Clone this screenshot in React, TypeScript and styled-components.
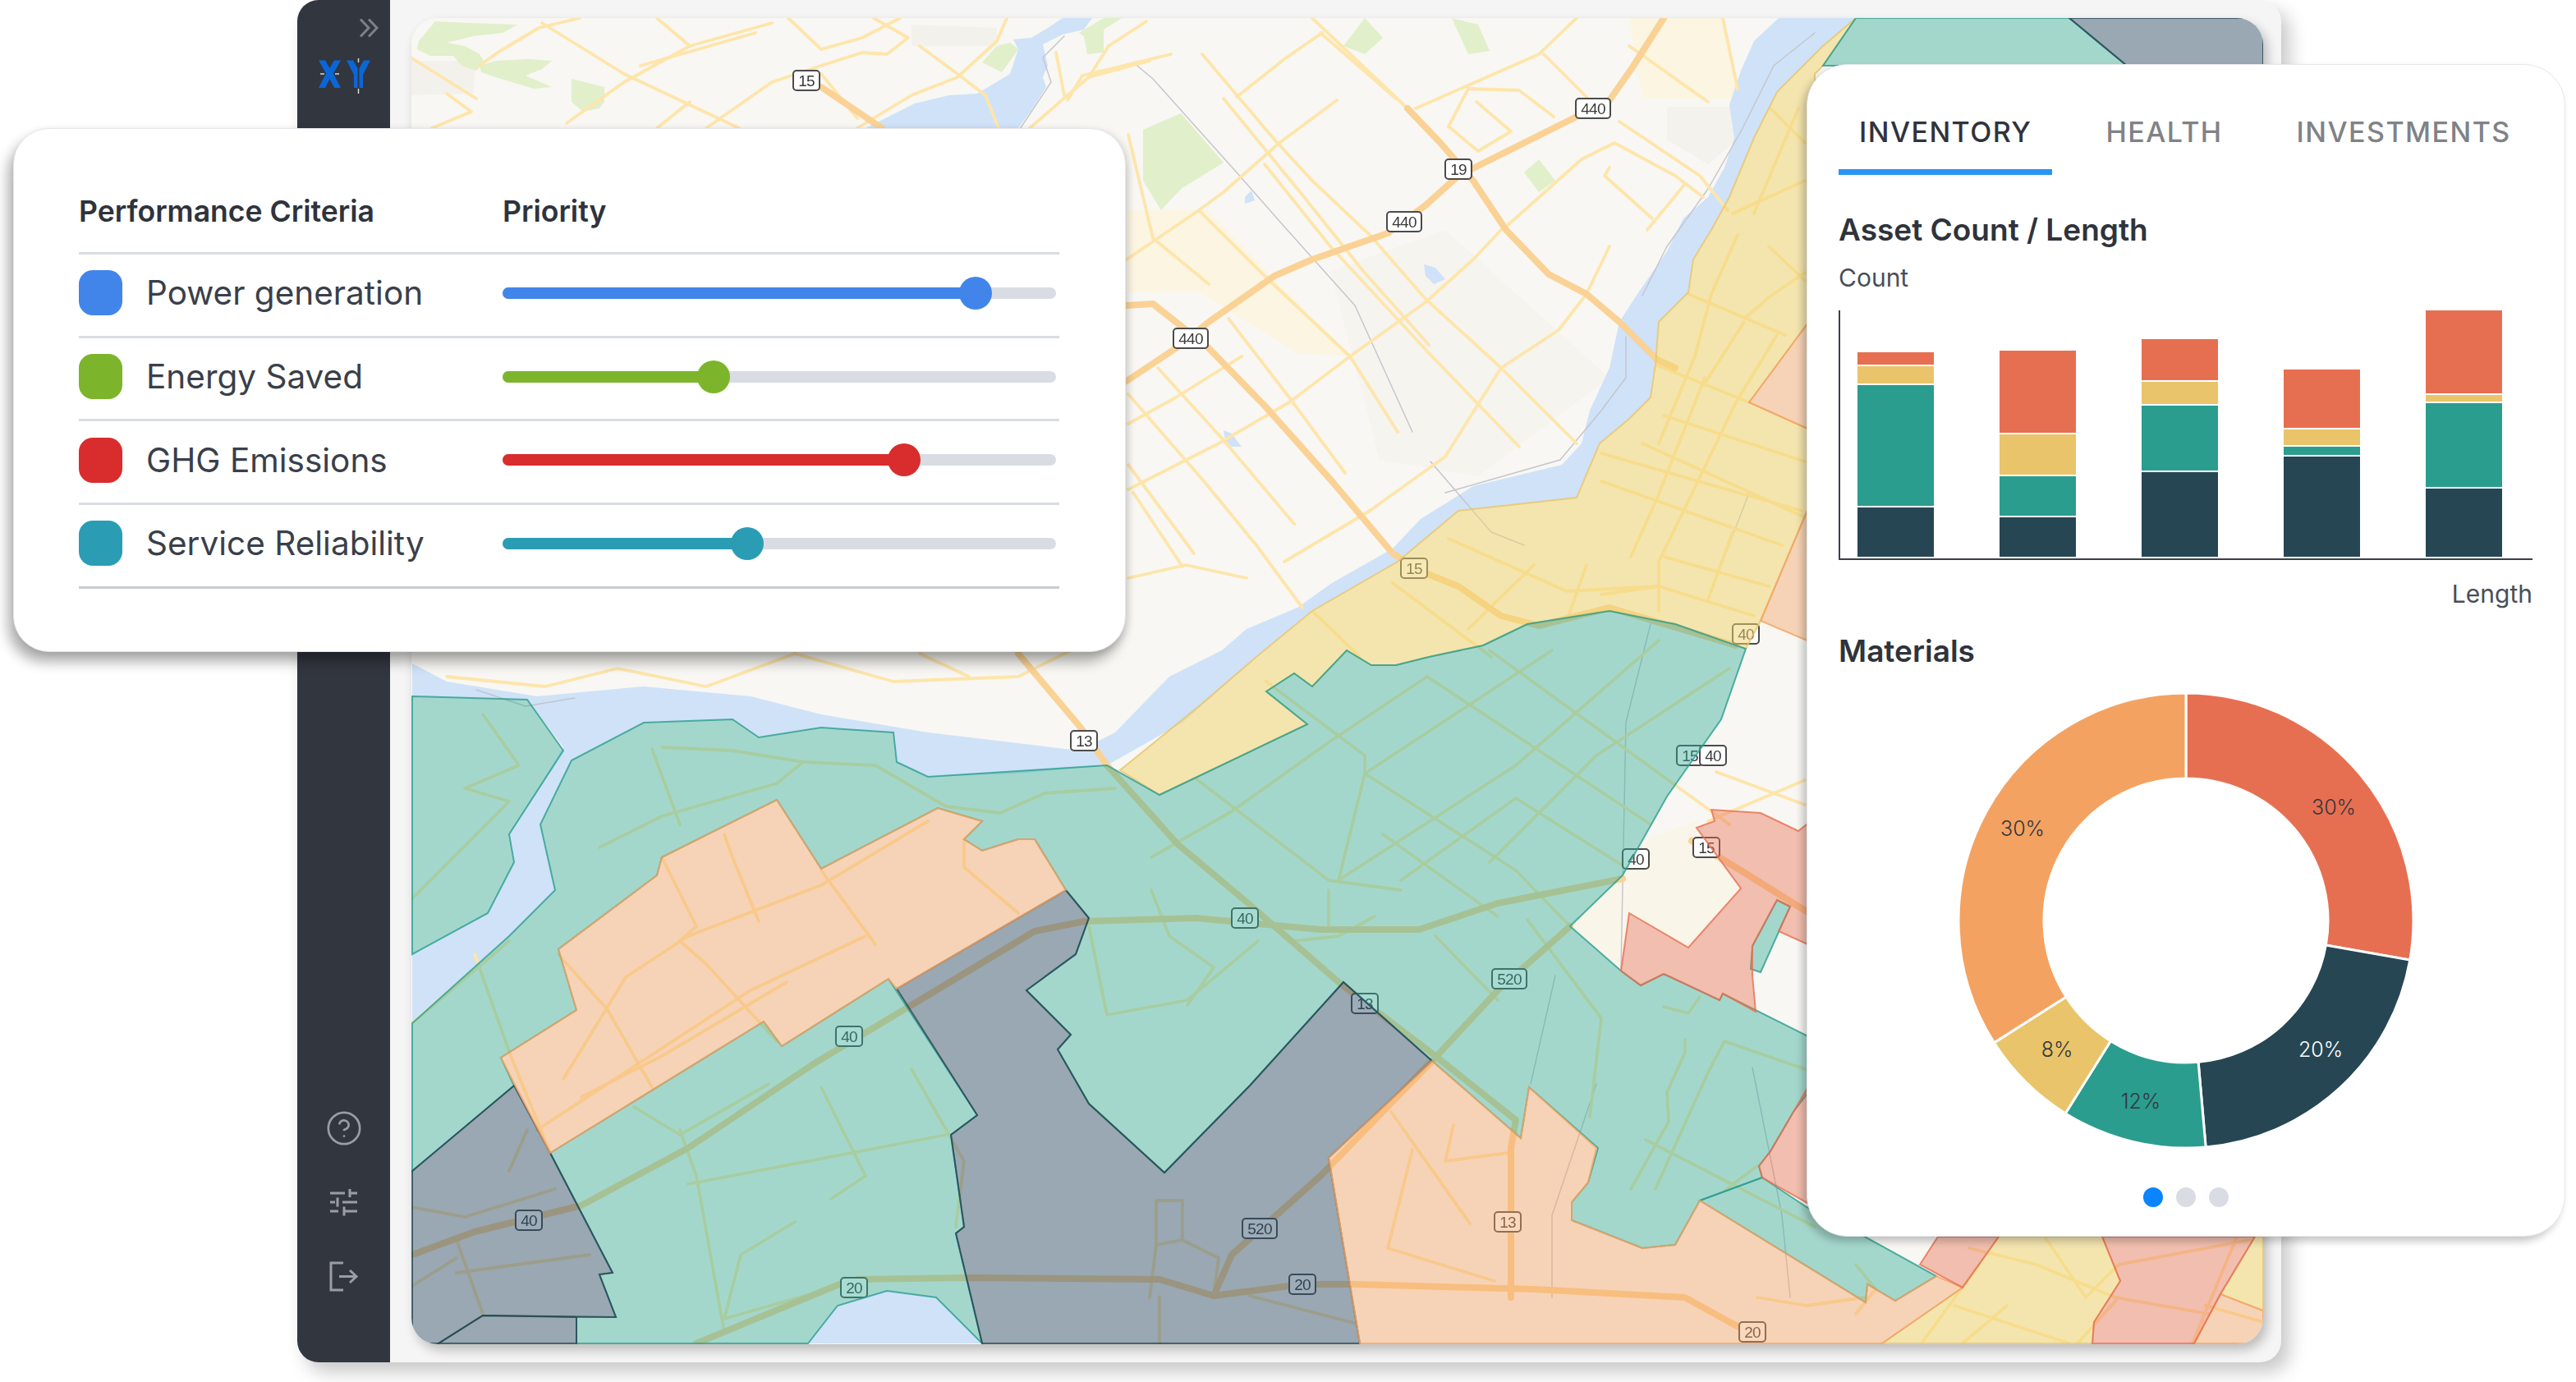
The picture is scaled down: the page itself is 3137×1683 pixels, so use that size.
import { CircleHelp } from 'lucide-react';
import styled, { createGlobalStyle } from 'styled-components';

const GlobalStyle = createGlobalStyle`
  html, body {
    margin: 0;
    background: #ffffff;
    overflow: hidden;
  }
  * {
    box-sizing: border-box;
  }
`;

const Page = styled.div`
  position: relative;
  width: 3137px;
  height: 1683px;
  padding-left: 362px;
  font-family: Inter, "Liberation Sans", sans-serif;
  color: #2f333c;
`;

const Frame = styled.div`
  display: flex;
  width: 2416px;
  height: 1659px;
  background: #f5f5f5;
  border-radius: 26px;
  box-shadow: 10px 12px 22px rgba(0, 0, 0, 0.22);
`;

const Sidebar = styled.nav`
  display: flex;
  flex-direction: column;
  width: 113px;
  flex-shrink: 0;
  padding: 22px 12px 85px 26px;
  background: #32363f;
  border-radius: 26px 0 0 26px;
`;

const Collapse = styled.svg`
  display: block;
  align-self: flex-end;
  width: 26px;
  height: 24px;
`;

const Logo = styled.svg`
  display: block;
  width: 66px;
  height: 44px;
  margin-top: 25px;
`;

const SideIcons = styled.div`
  display: flex;
  flex-direction: column;
  align-items: center;
  gap: 50px;
  width: 62px;
  margin-top: auto;
  color: #9b9da3;

  & > .help {
    margin: -3px;
  }
`;

const SideIcon = styled.svg`
  display: block;
  width: 40px;
  height: 40px;
`;

const MapArea = styled.main`
  flex: 1;
  padding: 22px 22px 22px 26px;
`;

const MapBox = styled.div`
  height: 100%;
  border-radius: 32px;
  overflow: hidden;
  box-shadow: 5px 7px 14px rgba(0, 0, 0, 0.24);
`;

const MapSvg = styled.svg`
  display: block;
  width: 100%;
  height: 100%;
  background: #f8f7f3;
  filter: blur(0.7px);
`;

const Road = styled.polyline<{ $w?: number; $c?: string }>`
  fill: none;
  stroke: ${(p) => p.$c || '#fee5aa'};
  stroke-width: ${(p) => p.$w || 1.9};
  stroke-linejoin: round;
  stroke-linecap: round;
`;

const Area = styled.polygon<{ $c: string }>`
  fill: ${(p) => p.$c};
`;

const Zone = styled.polygon<{ $c: string; $s: string; $o?: number }>`
  fill: ${(p) => p.$c};
  fill-opacity: ${(p) => p.$o || 0.42};
  stroke: ${(p) => p.$s};
  stroke-opacity: 0.8;
  stroke-width: 1;
`;

const ShieldBox = styled.rect`
  fill: #ffffff;
  stroke: #4b4b4b;
  stroke-width: 1;
`;

const ShieldText = styled.text`
  font-family: "Liberation Sans", Arial, sans-serif;
  font-size: 9.5px;
  letter-spacing: -0.4px;
  fill: #3a3a3a;
  text-anchor: middle;
`;

const CriteriaCard = styled.section`
  position: absolute;
  left: 16px;
  top: 156px;
  width: 1355px;
  height: 638px;
  padding: 62px 80px 0 79px;
  background: #ffffff;
  border: 1px solid #e4e7eb;
  border-radius: 44px;
  box-shadow: -6px 12px 16px rgba(0, 0, 0, 0.32), 4px 2px 8px rgba(0, 0, 0, 0.1);
`;

const CriteriaHead = styled.div`
  display: grid;
  grid-template-columns: 516px 1fr;
  align-items: center;
  height: 91px;
  padding-bottom: 12px;
  border-bottom: 3px solid #d9dde3;
  font-size: 35.6px;
  font-weight: 600;
`;

const CriteriaRow = styled.div`
  display: grid;
  grid-template-columns: 82px 434px 1fr;
  align-items: center;
  height: 101.7px;
  padding-bottom: 5px;
  border-bottom: 3px solid #d9dde3;

  &:last-child {
    border-bottom-color: #c8ccd2;
  }
`;

const Swatch = styled.span<{ $color: string }>`
  display: block;
  width: 53px;
  height: 55px;
  border-radius: 17px;
  background: ${(p) => p.$color};
`;

const RowLabel = styled.span`
  font-size: 40.5px;
  color: #3a3f4a;
`;

const Track = styled.div`
  position: relative;
  width: 674px;
  height: 14px;
  border-radius: 7px;
  background: #d9dde3;
`;

const Fill = styled.div<{ $color: string }>`
  position: relative;
  height: 100%;
  border-radius: 7px;
  background: ${(p) => p.$color};
`;

const Thumb = styled.span<{ $color: string }>`
  position: absolute;
  right: -20px;
  top: -13px;
  width: 40px;
  height: 40px;
  border-radius: 50%;
  background: ${(p) => p.$color};
`;

const StatsCard = styled.aside`
  position: absolute;
  left: 2200px;
  top: 78px;
  width: 924px;
  height: 1428px;
  padding: 59px 38px 0 38px;
  background: #ffffff;
  border: 1px solid #e4e7eb;
  border-radius: 50px;
  box-shadow: -5px 6px 10px rgba(0, 0, 0, 0.22);
`;

const Tabs = styled.div`
  display: flex;
  gap: 40px;
`;

const Tab = styled.div<{ $active?: boolean }>`
  padding: 0 25px 22px;
  border-bottom: 7px solid ${(p) => (p.$active ? '#2a94f4' : 'transparent')};
  font-size: 34px;
  font-weight: 500;
  line-height: 46px;
  letter-spacing: 1.45px;
  color: ${(p) => (p.$active ? '#2f333c' : '#808285')};
`;

const SectionTitle = styled.h2<{ $top: number }>`
  margin: ${(p) => p.$top}px 0 0;
  font-size: 37px;
  font-weight: 600;
  line-height: 46px;
  color: #2f333c;
`;

const AxisLabel = styled.div<{ $end?: boolean }>`
  width: 845px;
  font-size: 30px;
  line-height: 36px;
  color: #4a4e57;
  text-align: ${(p) => (p.$end ? 'right' : 'left')};
`;

const CountLabel = styled(AxisLabel)`
  margin-top: 17px;
`;

const LengthLabel = styled(AxisLabel)`
  margin-top: 23px;
`;

const BarChart = styled.div`
  display: flex;
  align-items: flex-end;
  gap: 80px;
  width: 845px;
  height: 304px;
  margin-top: 22px;
  padding: 0 0 2px 21px;
  border-left: 2px solid #3a3f4a;
  border-bottom: 2px solid #3a3f4a;
`;

const Bar = styled.div`
  display: flex;
  flex-direction: column;
  gap: 2px;
  width: 93px;
`;

const Segment = styled.div<{ $color: string; $h: number }>`
  height: ${(p) => p.$h}px;
  background: ${(p) => p.$color};
`;

const Donut = styled.svg`
  display: block;
  width: 552px;
  height: 552px;
  margin: 29px auto 0;
  overflow: visible;
`;

const Slice = styled.path<{ $color: string }>`
  fill: ${(p) => p.$color};
  stroke: #ffffff;
  stroke-width: 3;
`;

const SliceLabel = styled.text<{ $light?: boolean }>`
  font-family: Inter, "Liberation Sans", sans-serif;
  font-size: 25px;
  font-weight: 300;
  fill: ${(p) => (p.$light ? '#ffffff' : '#33373f')};
  text-anchor: middle;
  dominant-baseline: central;
`;

const Dots = styled.div`
  display: flex;
  justify-content: center;
  gap: 16px;
  margin-top: 49px;
`;

const Dot = styled.span<{ $active?: boolean }>`
  width: 24px;
  height: 24px;
  border-radius: 50%;
  background: ${(p) => (p.$active ? '#0a84ff' : '#d9dde3')};
`;

const RED = '#e76f51';
const YELLOW = '#e9c46a';
const TEAL = '#2a9d8f';
const NAVY = '#264653';
const ORANGE = '#f4a261';

const criteria = [
  { name: 'Power generation', color: '#4285ea', value: 85.5 },
  { name: 'Energy Saved', color: '#7cb52b', value: 38.1 },
  { name: 'GHG Emissions', color: '#d92c2c', value: 72.5 },
  { name: 'Service Reliability', color: '#2a9db5', value: 44.2 },
];

// heights top to bottom: red, yellow, teal, navy
const bars = [
  [15.5, 21, 147, 60],
  [100, 48.5, 48.5, 48],
  [50.5, 26.5, 79, 103.5],
  [71, 19, 10, 122.5],
  [101, 8, 102, 83.5],
];
const barColors = [RED, YELLOW, TEAL, NAVY];

const slices = [
  { from: 0, to: 100, color: RED, label: '30%', x: 456, y: 138 },
  { from: 100, to: 175, color: NAVY, label: '20%', x: 440, y: 433, light: true },
  { from: 175, to: 212, color: TEAL, label: '12%', x: 221, y: 496 },
  { from: 212, to: 237.5, color: YELLOW, label: '8%', x: 119, y: 433 },
  { from: 237.5, to: 360, color: ORANGE, label: '30%', x: 77, y: 164 },
];

function polar(r: number, deg: number) {
  const a = (deg * Math.PI) / 180;
  return `${276 + r * Math.sin(a)} ${276 - r * Math.cos(a)}`;
}

function slicePath(from: number, to: number) {
  const large = to - from > 180 ? 1 : 0;
  return `M${polar(277, from)} A277 277 0 ${large} 1 ${polar(277, to)} L${polar(173, to)} A173 173 0 ${large} 0 ${polar(173, from)}Z`;
}

const parks = [
  '255,25 265,13 285,14 315,15 306,20 288,22 272,26 283,28 292,33 295,38 290,43 281,40 276,34 262,34 254,30',
  '292,40 302,37 322,36 336,37 330,42 320,46 336,53 325,54 305,48 293,44',
  '348,48 368,53 368,62 365,66 355,68 348,62',
  '598,38 607,28 615,26 620,30 610,44',
  '657,20 672,11 683,11 672,18 672,32 662,33 660,22',
  '696,79 719,69 745,99 719,115 707,128 696,110',
  '818,28 831,11 842,23 831,33',
  '884,11 900,15 907,31 894,33',
  '928,105 937,97 947,110 937,117',
];

const tints = [
  { c: '#fbf5e2', p: '687,128 735,128 822,217 790,215 730,178 687,178' },
  { c: '#fbf5e2', p: '992,11 1049,11 1060,60 1000,60' },
  { c: '#f6f4ef', p: '810,165 880,140 980,230 900,290 840,280' },
  { c: '#f3f1ec', p: '250,37 290,37 288,57 250,58' },
  { c: '#f3f1ec', p: '555,15 607,17 607,28 555,28' },
  { c: '#f4f2ec', p: '1015,65 1055,65 1058,85 1040,100 1015,85' },
  { c: '#f9f5e8', p: '955,564 987,590 992,556 1028,577 1060,541 1033,500 1005,510 990,530' },
];

const waters = [
  '1130,11 1110,28 1082,56 1068,84 1053,120 1042,140 1031,158 1028,178 1010,196 1008,222 1005,242 992,255 974,270 960,303 888,311 851,342 799,372 765,400 720,440 674,466 620,471 565,473 546,464 544,446 500,443 462,449 446,438 392,440 348,463 343,455 321,426 251,424 251,404 272,415 327,424 392,418 457,424 500,435 565,446 657,457 679,446 712,412 744,396 759,383 790,370 811,355 848,334 865,316 897,296 951,283 963,270 968,250 980,224 986,196 997,179 1015,153 1025,133 1040,120 1050,102 1056,84 1053,64 1060,43 1068,25 1083,11',
  '343,455 348,463 329,502 338,542 310,570 251,622 251,581 297,556 313,525 310,508',
  '647,11 665,11 660,18 647,21 635,27 638,40 635,47 637,53 628,67 620,78 615,110 520,110 527,78 557,63 578,58 595,57 615,45 620,30 617,24 628,23 638,17',
  '492,818 510,795 540,786 570,790 590,810 598,818',
  '867,161 874,163 880,170 873,173 868,168',
  '745,262 750,264 756,272 750,272 746,268',
  '758,120 762,116 764,122 758,124',
];

const highways = [
  '686,232 716,212 736,196 776,168 799,158 845,142 868,125 888,107 960,71 980,61 994,41 1013,11',
  '857,66 877,87 897,110 917,140 943,167 966,179 986,196 1009,219 1020,224',
  '736,212 770,247 811,293 848,337 868,349 888,357 914,375 937,381 980,370 1057,393',
  '686,186 702,185 716,196 736,212',
  '500,53 537,78',
  '620,398 658,443 674,466 717,514 760,550 815,598 874,643 923,682 920,699 920,790',
  '251,764 289,750 354,734 419,699 495,648 565,606 630,567 660,561 728,559 804,566 864,566 912,550 988,535',
  '424,818 511,782 522,779 587,778 706,779 739,789 793,782 826,782 934,785 1026,790 1064,811',
  '956,564 912,603 872,646 804,716 750,764 739,789',
  '1030,512 1060,530 1100,555',
];

const roads = [
  '799,11 857,66', '732,33 776,85 799,110 834,143 868,182 914,224 960,270',
  '687,82 702,145 736,173', '730,128 770,168 822,217 851,263',
  '686,158 730,128 745,117 779,87 814,61', '753,59 782,36 805,20',
  '687,298 742,270 785,245 822,217 868,184 897,158 914,140', '687,258 716,242 756,217',
  '834,311 880,278 914,224', '782,342 834,311', '687,352 722,344 759,352',
  '914,224 949,201 966,179 980,150', '882,77 894,54 925,55 946,71',
  '862,66 937,33 960,11', '940,33 966,59', '992,28 1040,62', '1049,11 1058,54',
  '980,102 977,107 1006,133', '917,138 963,97 983,87 1020,107 1037,120',
  '986,74 1035,107 1052,128', '1003,140 1026,112', '650,61 659,46 713,33',
  '687,240 733,293 765,332 793,370', '705,224 745,268 788,319', '687,283 727,337',
  '748,194 785,242 819,288', '899,62 920,80 900,92 882,77', '804,20 850,60',
  '770,100 810,150 870,215 925,272', '745,60 790,115 830,165 870,210', '690,300 720,345',
  '292,40 303,32 328,17 353,11', '420,62 400,78', '400,11 420,28', '263,78 287,68 272,57',
  '500,30 525,23 548,11', '532,11 553,23 540,33 525,32 500,40', '560,28 583,45 600,58 608,78',
  '613,11 607,25 583,47 555,58 522,78', '500,45 522,72', '643,32 648,58',
  '698,13 675,28 663,47', '700,37 663,47 650,58 627,78', '250,35 290,60', '330,14 380,45 450,78',
  '390,40 460,20', '345,75 380,50 420,28 470,14', '480,11 500,30', '430,78 470,50 500,40',
  '272,412 332,418 376,407 430,418 484,398', '484,398 544,415 620,412 652,396', '560,398 590,412',
  '403,455 446,457 489,464 533,466 576,491 609,495 636,483 679,480',
  '365,516 403,497 473,477 489,464', '397,456 414,502', '251,547 310,488 283,480 316,466 294,435',
  '771,415 831,460 831,471 923,530 956,564', '869,412 1005,502', '907,396 1053,502',
  '728,474 809,536 853,542', '869,412 809,452 750,494 701,522', '945,396 831,471 815,536',
  '1010,390 923,466 815,536', '1053,407 972,460 907,525', '923,486 853,536', '923,486 988,527',
  '842,508 912,558', '663,564 674,618 723,609 766,573', '701,542 712,570 739,589 723,612',
  '788,573 815,570 837,558', '809,542 809,564', '874,570 912,609', '930,560 975,620 968,680',
  '403,522 424,564 414,573 430,587 473,634', '500,530 533,575', '340,581 370,615 397,662',
  '327,688 457,603 527,570', '343,657 381,595 419,570 500,539 565,500', '479,598 403,643 354,668',
  '441,508 446,522 462,561', '587,511 587,528 620,556', '414,688 424,716 441,811',
  '386,674 414,691 468,660', '500,662 527,716 506,730', '555,651 587,707 582,747',
  '484,744 451,764 441,803 511,783', '419,721 576,691', '289,581 311,643 335,702', '251,623 310,573',
  '251,735 283,741 338,724', '310,713 321,688', '278,755 294,800', '251,783 278,766', '278,775 359,764',
  '704,731 720,731 720,755 704,758 704,731', '704,758 700,790', '720,755 742,766 739,789',
  '761,789 826,806', '706,790 706,818', '885,685 880,707 918,702', '847,677 895,745', '860,700 845,760 910,780',
  '1026,633 1026,641 1015,665 1016,683 993,724', '1050,634 1040,653 1008,724', '1002,694 1105,747',
  '1013,613 1028,617 1035,607', '1050,725 1070,710', '1050,634 1099,651',
  '1028,179 1087,204', '1008,222 1065,245', '1038,230 1010,301 993,339',
  '1082,204 1057,245 1030,301 1010,342 1010,372', '1062,196 1037,235', '1013,253 1099,281',
  '1000,270 1099,315', '975,276 1097,311', '975,293 1085,332', '1013,339 1077,357',
  '1055,324 1040,365', '975,362 1010,357 1068,375', '1058,143 1042,179 1032,217 1010,270',
  '1055,130 1099,110', '1078,66 1099,87', '1095,66 1068,130', '1077,150 1099,171',
  '1062,194 1077,181 1099,166', '799,372 828,400', '848,355 908,400', '966,344 954,378',
  '882,328 954,360 1009,357', '934,344 894,383', '1040,500 1099,475', '1045,470 1099,490',
  '1199,760 1240,770 1288,790 1345,800', '1205,770 1170,818', '1245,753 1270,790 1290,770 1370,755',
  '1190,795 1260,818', '1222,795 1195,818', '1290,790 1265,818', '1335,818 1362,753', '1343,795 1378,805',
  '1130,770 1142,785 1130,800', '1070,790 1100,795 1135,790',
];

const thinLines = [
  '690,38 702,48 753,105 782,138 825,186 860,263', '871,281 908,324 928,332', '620,80 640,50 635,35 648,22',
  '1105,20 1080,40 1060,80 1040,115 1015,150 1000,180', '990,205 990,230 975,250 950,280 880,300',
  '947,594 932,660', '1005,380 990,440 987,590', '1065,300 1042,360', '290,420 320,430 350,425',
  '972,660 945,740 945,790', '1067,650 1085,740 1090,790',
];

const shields = [
  { x: 491, y: 49, t: '15' }, { x: 970, y: 66, t: '440' }, { x: 888, y: 103, t: '19' },
  { x: 855, y: 135, t: '440' }, { x: 725, y: 206, t: '440' }, { x: 861, y: 346, t: '15' },
  { x: 1063, y: 386, t: '40' }, { x: 660, y: 451, t: '13' }, { x: 1029, y: 460, t: '15' },
  { x: 1043, y: 460, t: '40' }, { x: 996, y: 523, t: '40' }, { x: 1039, y: 516, t: '15' },
  { x: 758, y: 559, t: '40' }, { x: 919, y: 596, t: '520' }, { x: 831, y: 611, t: '13' },
  { x: 517, y: 631, t: '40' }, { x: 322, y: 743, t: '40' }, { x: 767, y: 748, t: '520' },
  { x: 918, y: 744, t: '13' }, { x: 520, y: 784, t: '20' }, { x: 793, y: 782, t: '20' },
  { x: 1067, y: 811, t: '20' },
];

const zoneTeal = { c: '#2fab95', s: TEAL };
const zoneNavy = { c: '#2a4a66', s: NAVY, o: 0.46 };
const zoneOrange = { c: ORANGE, s: ORANGE };
const zoneRed = { c: RED, s: RED };
const zoneYellow = { c: '#efd36b', s: YELLOW, o: 0.5 };

const zones = [
  {
    ...zoneYellow,
    p: '1130,11 1110,28 1082,56 1068,84 1053,120 1042,140 1031,158 1028,178 1010,196 1008,222 1005,242 992,255 974,270 960,303 888,311 851,342 799,372 765,400 730,430 682,469 706,484 796,441 771,421 788,410 799,418 820,396 835,405 850,405 870,400 903,393 930,380 980,372 1020,380 1063,395 1072,378 1105,300 1105,263 1065,245 1105,191 1105,45 1110,40',
  },
  { ...zoneYellow, p: '1217,753 1280,753 1291,780 1275,805 1274,818 1146,818 1195,784' },
  { ...zoneYellow, p: '1373,753 1378,753 1378,798 1352,788' },
  { ...zoneTeal, p: '251,424 321,426 343,457 310,508 313,525 297,556 251,581' },
  {
    ...zoneTeal,
    p: '251,623 310,570 338,542 329,502 348,463 392,440 446,438 462,449 500,443 544,446 546,464 565,473 674,466 706,484 796,441 771,421 788,410 799,418 820,396 835,405 850,405 870,400 903,393 930,380 980,372 1020,380 1063,395 1048,438 1015,485 988,533 956,564 988,592 999,600 1013,593 1047,609 1049,605 1105,633 1105,660 1092,677 1078,701 1071,710 1073,717 1035,731 1020,758 1000,760 957,743 957,732 967,720 973,699 931,662 926,693 872,646 818,598 761,661 709,714 663,672 644,639 652,630 625,603 655,581 663,559 649,542 630,511 620,511 598,518 587,511 598,500 571,492 500,529 473,487 403,522 400,533 340,578 351,615 305,644 313,661 251,713',
  },
  { ...zoneTeal, p: '335,702 465,622 476,637 541,596 595,679 579,691 587,747 582,751 598,818 590,810 570,790 540,786 510,795 492,818 351,818 351,802 375,802 365,776 373,775' },
  { ...zoneTeal, p: '1082,548 1090,552 1072,592 1066,590 1067,576' },
  { ...zoneTeal, p: '1035,731 1136,793 1137,782 1154,792 1179,777 1130,750 1100,735 1073,717' },
  { ...zoneTeal, p: '1130,11 1260,11 1295,40 1110,40' },
  { ...zoneNavy, p: '251,713 313,661 335,702 373,775 365,776 375,802 294,801 267,818 251,818' },
  { ...zoneNavy, p: '294,801 351,802 351,818 267,818' },
  { ...zoneNavy, p: '546,602 649,542 663,559 655,581 625,603 652,630 644,639 663,672 709,714 761,661 818,598 872,646 809,705 828,818 598,818 582,751 587,747 579,691 595,679' },
  { ...zoneNavy, p: '1260,11 1378,11 1378,40 1295,40' },
  { ...zoneOrange, p: '620,511 598,518 587,511 598,500 571,492 500,529 473,487 403,522 400,533 340,578 351,615 305,644 335,702 465,622 476,637 541,596 546,602 649,542 630,511' },
  { ...zoneOrange, p: '872,646 926,693 931,662 972,699 967,720 957,732 957,743 1000,760 1020,758 1035,731 1136,793 1137,782 1154,792 1179,777 1195,784 1146,818 828,818 809,705' },
  { ...zoneOrange, p: '1065,245 1105,191 1105,263' },
  { ...zoneOrange, p: '1072,378 1105,300 1105,392' },
  { ...zoneOrange, p: '1336,818 1352,788 1378,798 1378,818' },
  { ...zoneRed, p: '1042,493 1044,500 1033,504 1060,541 1028,577 992,556 987,591 999,600 1013,593 1047,609 1049,605 1069,616 1067,594 1067,576 1082,548 1090,552 1083,567 1105,577 1105,498 1095,506 1072,495' },
  { ...zoneRed, p: '1105,655 1092,677 1078,701 1071,710 1073,717 1105,735' },
  { ...zoneRed, p: '1169,770 1180,753 1217,753 1195,784' },
  { ...zoneRed, p: '1280,753 1373,753 1352,788 1336,818 1274,818 1275,805 1291,780' },
];

function CityMap() {
  return (
    <MapSvg viewBox="250.5 11 1127.5 807.5" preserveAspectRatio="none">
      {tints.map((t) => <Area key={t.p} $c={t.c} points={t.p} />)}
      {parks.map((p) => <Area key={p} $c="#e1efca" points={p} />)}
      {waters.map((p) => <Area key={p} $c="#cfe2f8" points={p} />)}
      {thinLines.map((p) => <Road key={p} $c="#c4c4cc" $w={0.7} points={p} />)}
      {roads.map((p) => <Road key={p} points={p} />)}
      {highways.map((p) => <Road key={p} $c="#fbd295" $w={4} points={p} />)}
      {shields.map((s) => (
        <g key={`${s.x}-${s.y}`}>
          <ShieldBox x={s.x - (s.t.length > 2 ? 10.5 : 8)} y={s.y - 6} width={s.t.length > 2 ? 21 : 16} height={12} rx={2} />
          <ShieldText x={s.x} y={s.y + 3.4}>{s.t}</ShieldText>
        </g>
      ))}
      {zones.map((z) => <Zone key={z.p} $c={z.c} $s={z.s} $o={z.o} points={z.p} />)}
    </MapSvg>
  );
}

export default function App() {
  return (
    <Page>
      <GlobalStyle />
      <Frame>
        <Sidebar>
          <Collapse viewBox="0 0 26 24" fill="none" stroke="#7d8087" strokeWidth="3">
            <path d="M2 1.5 L12 12 L2 22.5" />
            <path d="M12 1.5 L22 12 L12 22.5" />
          </Collapse>
          <Logo viewBox="0 0 66 44">
            <path fill="#0b66d8" d="M0 2.5h8l5.5 9.5 5.5-9.5h8l-9 16 9 17.5h-8l-5.5-11-5.5 11h-8l9-17.5z" />
            <path fill="#0b66d8" d="M34 2.5h8l5.5 9.5v24h-4.5v-16zM63 2.5h-8l-5.5 9.5v24h4.5v-16z" />
            <path stroke="#d8dadd" strokeWidth="1.5" d="M2 19h5M20 19h5M48.5 0v5M48.5 37v6" />
          </Logo>
          <SideIcons>
            <CircleHelp className="help" size={46} strokeWidth={1.4} />
            <SideIcon viewBox="0 0 40 40" fill="none" stroke="currentColor" strokeWidth="3">
              <path d="M3 9h18M27 9h9M27 4v10M3 20h6M12 14.5v11M18 20h18M3 31h10M20 25.5v11M20 31h16" />
            </SideIcon>
            <SideIcon viewBox="0 0 40 40" fill="none" stroke="currentColor" strokeWidth="3">
              <path d="M19 4H4v33h15M14 20.5h21M27 13l8 7.5-8 7.5" />
            </SideIcon>
          </SideIcons>
        </Sidebar>
        <MapArea>
          <MapBox>
            <CityMap />
          </MapBox>
        </MapArea>
      </Frame>

      <CriteriaCard>
        <CriteriaHead>
          <span>Performance Criteria</span>
          <span>Priority</span>
        </CriteriaHead>
        {criteria.map((c) => (
          <CriteriaRow key={c.name}>
            <Swatch $color={c.color} />
            <RowLabel>{c.name}</RowLabel>
            <Track>
              <Fill $color={c.color} style={{ width: `${c.value}%` }}>
                <Thumb $color={c.color} />
              </Fill>
            </Track>
          </CriteriaRow>
        ))}
      </CriteriaCard>

      <StatsCard>
        <Tabs>
          <Tab $active>INVENTORY</Tab>
          <Tab>HEALTH</Tab>
          <Tab>INVESTMENTS</Tab>
        </Tabs>
        <SectionTitle $top={44}>Asset Count / Length</SectionTitle>
        <CountLabel>Count</CountLabel>
        <BarChart>
          {bars.map((bar, i) => (
            <Bar key={i}>
              {bar.map((h, j) => <Segment key={j} $color={barColors[j]} $h={h} />)}
            </Bar>
          ))}
        </BarChart>
        <LengthLabel $end>Length</LengthLabel>
        <SectionTitle $top={29}>Materials</SectionTitle>
        <Donut viewBox="0 0 552 552">
          {slices.map((s) => <Slice key={s.from} $color={s.color} d={slicePath(s.from, s.to)} />)}
          {slices.map((s) => (
            <SliceLabel key={s.from} x={s.x} y={s.y} $light={s.light}>{s.label}</SliceLabel>
          ))}
        </Donut>
        <Dots>
          <Dot $active />
          <Dot />
          <Dot />
        </Dots>
      </StatsCard>
    </Page>
  );
}
